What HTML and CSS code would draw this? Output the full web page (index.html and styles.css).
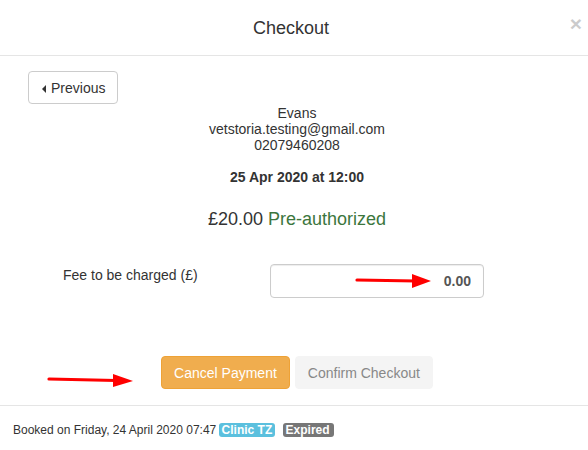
FILE: index.html
```html
<!DOCTYPE html>
<html>
<head>
<meta charset="utf-8">
<link rel="stylesheet" href="styles.css">
</head>
<body>
<div class="modal">
  <div class="modal-header">
    <h4 class="modal-title">Checkout</h4>
    <span class="close">&times;</span>
  </div>
  <div class="modal-body">
    <button class="btn btn-prev"><span class="caret-left"></span>Previous</button>
    <div class="centered info">
      <div>Evans</div>
      <div>vetstoria.testing@gmail.com</div>
      <div>02079460208</div>
    </div>
    <div class="centered date">25 Apr 2020 at 12:00</div>
    <div class="centered amount">£20.00 <span class="pre">Pre-authorized</span></div>
    <div class="fee-row">
      <label class="fee-label">Fee to be charged (£)</label>
      <input class="fee-input" type="text" value="0.00" readonly>
    </div>
    <div class="centered actions">
      <button class="btn btn-warning">Cancel Payment</button>
      <button class="btn btn-disabled">Confirm Checkout</button>
    </div>
  </div>
  <div class="modal-footer">
    Booked on Friday, 24 April 2020 07:47 <span class="badge badge-info">Clinic TZ</span> <span class="badge badge-muted">Expired</span>
  </div>
  <svg class="annotations" width="588" height="450" viewBox="0 0 588 450">
    <path d="M357 280 L416 281" stroke="#ff0000" stroke-width="3.2" stroke-linecap="round" fill="none"/>
    <polygon points="412,274 431,281 412,288" fill="#ff0000"/>
    <path d="M49 379 L116 380.5" stroke="#ff0000" stroke-width="3.2" stroke-linecap="round" fill="none"/>
    <polygon points="113,374 133,381 113,387" fill="#ff0000"/>
  </svg>
</div>
</body>
</html>
```
FILE: styles.css
```css
html, body {
  margin: 0;
  padding: 0;
  background: #fff;
}
body {
  font-family: "Liberation Sans", Arial, sans-serif;
  font-size: 14px;
  color: #333;
}
.modal {
  position: relative;
  width: 588px;
  height: 450px;
  overflow: hidden;
}
.modal-header {
  position: relative;
  height: 55px;
  border-bottom: 1px solid #e5e5e5;
  display: flex;
  align-items: center;
  justify-content: center;
}
.modal-title {
  margin: 0;
  padding-right: 6px;
  font-size: 18px;
  font-weight: normal;
  line-height: 20px;
  color: #333;
}
.close {
  position: absolute;
  right: 6px;
  top: 12px;
  font-size: 21px;
  font-weight: bold;
  line-height: 24px;
  color: #000;
  opacity: 0.2;
}
.modal-body {
  padding: 15px 0 16px 0;
}
.btn {
  display: inline-block;
  font-family: "Liberation Sans", Arial, sans-serif;
  font-size: 14px;
  line-height: 19px;
  padding: 7px 12px 5px 12px;
  border: 1px solid transparent;
  border-radius: 4px;
  background: #fff;
  color: #333;
  margin: 0;
  cursor: pointer;
}
.btn-prev {
  margin-left: 28px;
  border-color: #ccc;
  padding: 7px 12px 5px 13px;
  display: flex;
  align-items: center;
}
.caret-left {
  display: inline-block;
  width: 0;
  height: 0;
  border-top: 4px solid transparent;
  border-bottom: 4px solid transparent;
  border-right: 4px solid #333;
  margin-right: 5px;
}
.centered {
  padding-left: 6px;
  text-align: center;
}
.info {
  margin-top: 1px;
  line-height: 16px;
}
.date {
  margin-top: 16px;
  line-height: 16px;
  font-weight: bold;
}
.amount {
  margin-top: 24px;
  font-size: 18px;
  line-height: 20px;
}
.pre {
  color: #3c763d;
}
.fee-row {
  margin-top: 35px;
  margin-left: 63px;
  display: grid;
  grid-template-columns: 207px 214px;
  align-items: start;
}
.fee-label {
  margin-top: 3px;
  line-height: 16px;
  color: #333;
}
.fee-input {
  box-sizing: border-box;
  width: 214px;
  height: 34px;
  padding: 6px 12px;
  border: 1px solid #ccc;
  border-radius: 4px;
  font-family: "Liberation Sans", Arial, sans-serif;
  font-size: 14px;
  font-weight: bold;
  color: #555;
  text-align: right;
  outline: none;
  box-shadow: inset 0 1px 1px rgba(0,0,0,0.075);
}
.actions {
  margin-top: 58px;
  display: flex;
  justify-content: center;
  gap: 5px;
}
.btn-warning {
  background: #f0ad4e;
  border-color: #eea236;
  color: #fff;
}
.btn-disabled {
  background: #f4f4f4;
  border-color: #f4f4f4;
  color: #888;
}
.modal-footer {
  border-top: 1px solid #e5e5e5;
  padding: 14px 13px;
  font-size: 12px;
  line-height: 20px;
  color: #333;
}
.badge {
  display: inline-block;
  font-size: 12px;
  font-weight: bold;
  line-height: 12px;
  padding: 1px 3px;
  border-radius: 3px;
  color: #fff;
}
.badge-info {
  background: #5bc0de;
  margin-left: -1px;
}
.badge-muted {
  background: #777;
  margin-left: 4px;
  padding: 1px 4px 1px 3px;
}
.annotations {
  position: absolute;
  left: 0;
  top: 0;
  pointer-events: none;
}
```
